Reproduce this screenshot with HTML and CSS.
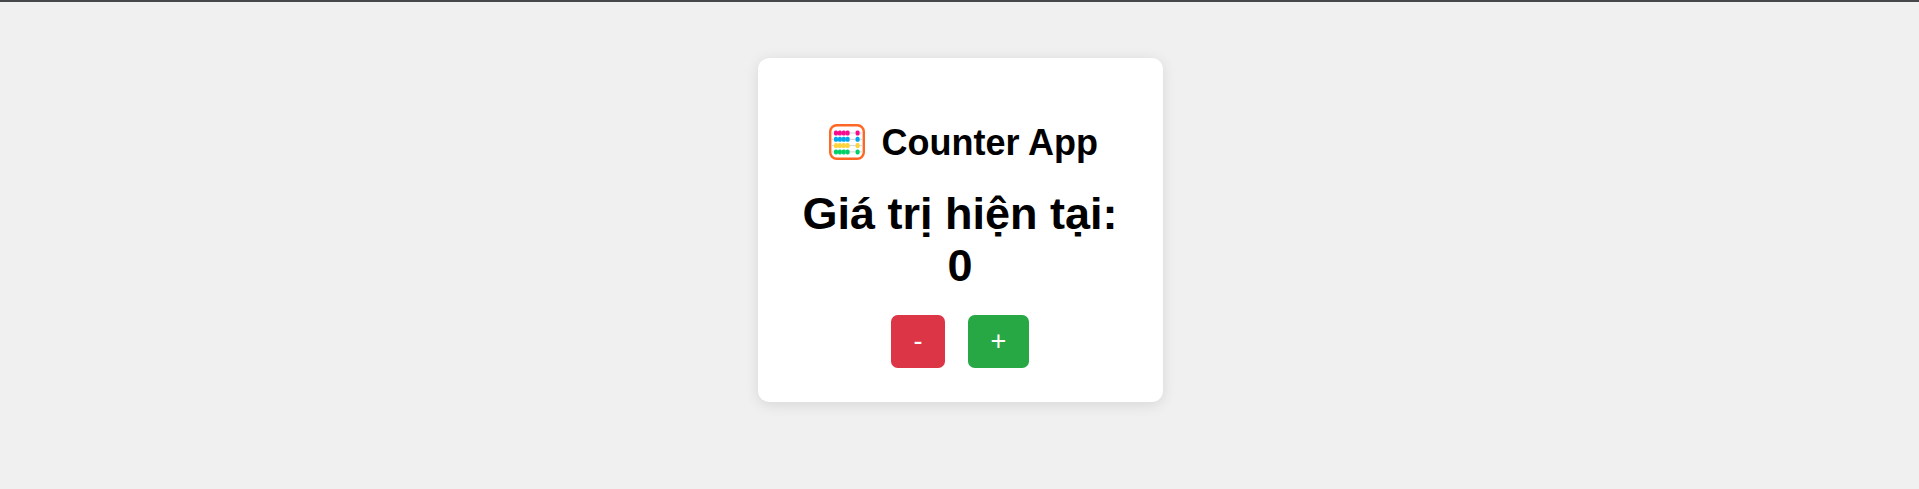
FILE: index.html
```html
<!DOCTYPE html>
<html lang="vi">
<head>
<meta charset="UTF-8">
<title>Counter App</title>
<link rel="stylesheet" href="styles.css">
</head>
<body>
<main class="card">
  <h1 class="title">
    <svg class="abacus" viewBox="0 0 36 36" aria-hidden="true">
      <rect x="1.2" y="1.2" width="33.6" height="33.6" rx="6.5" fill="#fff" stroke="#ff6723" stroke-width="2.4"/>
      <path d="M2.4 9h31.2M2.4 15.3h31.2M2.4 21.6h31.2M2.4 27.9h31.2" stroke="#d3d3d3" stroke-width="1"/>
      <g fill="#f70a8d"><rect x="5" y="6.5" width="4" height="5" rx="1.6"/><rect x="8.9" y="6.5" width="4" height="5" rx="1.6"/><rect x="12.8" y="6.5" width="4" height="5" rx="1.6"/><rect x="16.6" y="6.5" width="4" height="5" rx="1.6"/><rect x="26.6" y="6.5" width="4" height="5" rx="1.6"/></g>
      <g fill="#00a6ed"><rect x="5" y="12.8" width="4" height="5" rx="1.6"/><rect x="8.9" y="12.8" width="4" height="5" rx="1.6"/><rect x="12.8" y="12.8" width="4" height="5" rx="1.6"/><rect x="16.6" y="12.8" width="4" height="5" rx="1.6"/><rect x="26.6" y="12.8" width="4" height="5" rx="1.6"/></g>
      <g fill="#ffd43b"><rect x="5" y="19.1" width="4" height="5" rx="1.6"/><rect x="8.9" y="19.1" width="4" height="5" rx="1.6"/><rect x="12.8" y="19.1" width="4" height="5" rx="1.6"/><rect x="16.6" y="19.1" width="4" height="5" rx="1.6"/><rect x="26.6" y="19.1" width="4" height="5" rx="1.6"/></g>
      <g fill="#00d26a"><rect x="5" y="25.4" width="4" height="5" rx="1.6"/><rect x="8.9" y="25.4" width="4" height="5" rx="1.6"/><rect x="12.8" y="25.4" width="4" height="5" rx="1.6"/><rect x="16.6" y="25.4" width="4" height="5" rx="1.6"/><rect x="26.6" y="25.4" width="4" height="5" rx="1.6"/></g>
    </svg>
    <span>Counter App</span>
  </h1>
  <div class="count">Giá trị hiện tại: 0</div>
  <div class="buttons">
    <button class="btn decrement" type="button">-</button>
    <button class="btn increment" type="button">+</button>
  </div>
</main>
</body>
</html>
```
FILE: styles.css
```css
* {
  box-sizing: border-box;
}

body {
  margin: 0;
  min-height: 489px;
  padding: 56px 0 0 2px;
  border-top: 2px solid #46474a;
  background: #f0f0f0;
  color: #000;
  font-family: "Liberation Sans", Arial, sans-serif;
}

.card {
  width: 405px;
  height: 344px;
  margin: 0 auto;
  padding: 34px 35px 34px 34px;
  border-radius: 11.25px;
  background: #fff;
  box-shadow: 0 2.25px 13.5px rgba(0, 0, 0, 0.1);
  text-align: center;
}

.title {
  display: flex;
  align-items: center;
  justify-content: center;
  gap: 16.5px;
  height: 48px;
  margin: 24px 0;
  padding: 4px 0 0 7px;
  font-size: 36px;
  line-height: 41px;
}

.abacus {
  width: 36px;
  height: 36px;
}

.count {
  font-size: 45px;
  font-weight: bold;
  line-height: 52px;
}

.buttons {
  display: flex;
  justify-content: center;
  gap: 23px;
  margin-top: 23px;
}

.btn {
  height: 53px;
  padding: 0 22.5px;
  border: 0;
  border-radius: 6.75px;
  color: #fff;
  font-family: inherit;
  font-size: 27px;
  line-height: 31px;
}

.decrement {
  background: #dc3545;
}

.increment {
  background: #28a745;
}
```
